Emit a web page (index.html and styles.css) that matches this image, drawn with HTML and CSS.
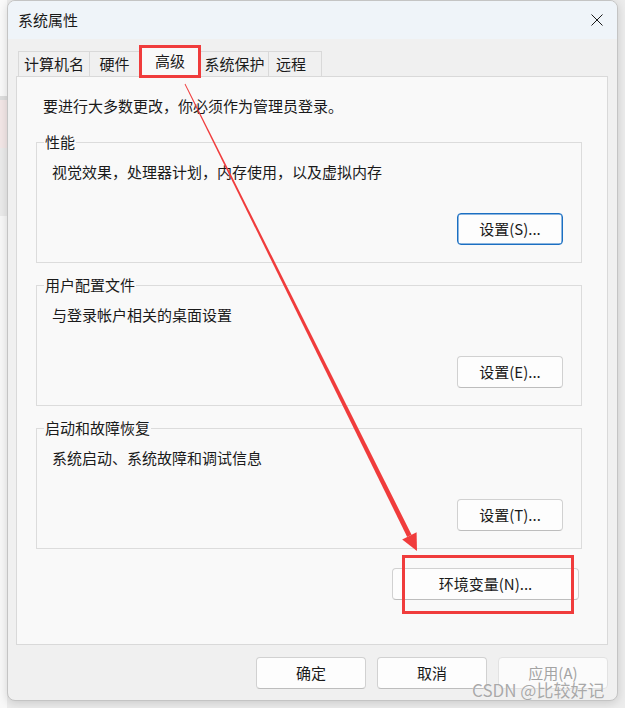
FILE: index.html
```html
<!DOCTYPE html>
<html lang="zh-CN">
  <head>
    <meta charset="UTF-8" />
    <meta name="viewport" content="width=device-width, initial-scale=1.0" />
    <title>系统属性</title>
    <link rel="stylesheet" href="styles.css">
  </head>
  <body>
    <div class="dialog">
      <div class="titlebar">
        <span class="title">系统属性</span>
        <svg class="close" width="12" height="12" viewBox="0 0 12 12">
          <path d="M0.5 0.5 L11.5 11.5 M11.5 0.5 L0.5 11.5" />
        </svg>
      </div>

      <div class="tabs">
        <div class="tab tab-name">计算机名</div>
        <div class="tab tab-hw">硬件</div>
        <div class="tab tab-adv active">高级</div>
        <div class="tab tab-prot">系统保护</div>
        <div class="tab tab-remote">远程</div>
      </div>

      <div class="panel">
        <p class="note">要进行大多数更改，你必须作为管理员登录。</p>

        <div class="group">
          <span class="group-title">性能</span>
          <p class="group-desc">视觉效果，处理器计划，内存使用，以及虚拟内存</p>
          <div class="group-actions">
            <button class="btn btn-default">设置(S)...</button>
          </div>
        </div>

        <div class="group">
          <span class="group-title">用户配置文件</span>
          <p class="group-desc">与登录帐户相关的桌面设置</p>
          <div class="group-actions">
            <button class="btn">设置(E)...</button>
          </div>
        </div>

        <div class="group">
          <span class="group-title">启动和故障恢复</span>
          <p class="group-desc">系统启动、系统故障和调试信息</p>
          <div class="group-actions">
            <button class="btn">设置(T)...</button>
          </div>
        </div>

        <div class="panel-actions">
          <button class="btn btn-wide">环境变量(N)...</button>
        </div>
      </div>

      <div class="footer">
        <button class="btn btn-footer">确定</button>
        <button class="btn btn-footer">取消</button>
        <button class="btn btn-footer" disabled>应用(A)</button>
      </div>
    </div>

    <div class="watermark">CSDN @比较好记</div>

    <!-- red annotations drawn over the screenshot -->
    <svg class="marks" width="625" height="708" viewBox="0 0 625 708">
      <rect x="140.5" y="46.5" width="59" height="30" />
      <rect x="403.5" y="556.5" width="169" height="56" />
      <polygon class="arrow" points="185.4,83.8 411.6,534.7 407.2,536.9 184.6,84.2" />
      <polygon class="arrow" points="417,551 416.6,532.2 402.2,539.4" />
    </svg>
  </body>
</html>
```

FILE: styles.css
```css
html,
body {
  margin: 0;
  padding: 0;
}

body {
  width: 625px;
  height: 708px;
  overflow: hidden;
  position: relative;
  font-family: "Noto Sans CJK SC", "Liberation Sans", sans-serif;
  font-size: 15px;
  color: #1a1a1a;
  background:
    linear-gradient(#fafafa 0 96px, #dedede 96px 100px, #f3e7e7 100px 148px, #ebebeb 148px 216px, #f8f8f8 216px) left top / 7px 100% no-repeat,
    #ececec;
}

.dialog {
  box-sizing: border-box;
  width: 611px;
  height: 701px;
  margin-left: 7px;
  display: flex;
  flex-direction: column;
  background-color: #f0f0f0;
  border: 1px solid #c4c4c4;
  border-radius: 8px;
  overflow: hidden;
  box-shadow: 0 2px 10px rgba(0, 0, 0, 0.15);
}

.titlebar {
  height: 38px;
  flex-shrink: 0;
  display: flex;
  align-items: center;
  padding-left: 10px;
  background-color: #eff4f9;
}

.title {
  line-height: 20px;
}

.close {
  margin-left: auto;
  margin-right: 14px;
}

.close path {
  stroke: #1a1a1a;
  stroke-width: 1;
  fill: none;
}

.tabs {
  height: 37px;
  flex-shrink: 0;
  display: flex;
  align-items: flex-end;
  padding-left: 10px;
}

.tab {
  box-sizing: border-box;
  height: 25px;
  display: flex;
  justify-content: center;
  align-items: center;
  border: 1px solid #d9d9d9;
  border-bottom: none;
  margin-right: -1px;
  background-color: #f0f0f0;
  line-height: 20px;
}

.tab-name {
  width: 72px;
}

.tab-hw {
  width: 51px;
}

.tab-adv {
  width: 62px;
}

.tab-prot {
  width: 69px;
}

.tab-remote {
  width: 54px;
  justify-content: flex-start;
  padding-left: 7px;
}

.tab.active {
  height: 30px;
  margin-bottom: -1px;
  padding-bottom: 3px;
  background-color: #f9f9f9;
  position: relative;
  z-index: 1;
}

.panel {
  margin: 0 9px 0 8px;
  padding: 19px 25px 44px 19px;
  border: 1px solid #d9d9d9;
  background-color: #f9f9f9;
}

.note {
  margin: 0;
  padding-left: 7px;
  line-height: 20px;
}

.group {
  margin-top: 22px;
  padding: 0 18px 17px 15px;
  border: 1px solid #dcdcdc;
}

.note + .group {
  margin-top: 26px;
}

.group-title {
  display: block;
  width: fit-content;
  margin: -11px 0 0 -8px;
  padding: 0 1px;
  line-height: 20px;
  background-color: #f9f9f9;
}

.group-desc {
  margin: 10px 0 0;
  line-height: 20px;
}

.group-actions {
  display: flex;
  justify-content: flex-end;
  margin-top: 31px;
}

.panel-actions {
  display: flex;
  justify-content: flex-end;
  margin-top: 19px;
  margin-right: 3px;
}

.btn {
  box-sizing: border-box;
  width: 106px;
  height: 32px;
  padding: 0;
  border: 1px solid #d1d1d1;
  border-bottom-color: #bdbdbd;
  border-radius: 4px;
  background-color: #fdfdfd;
  font-family: inherit;
  font-size: 15px;
  color: #1a1a1a;
  line-height: 20px;
}

.btn-default {
  border: 1px solid #1b6fc2;
  box-shadow: inset 0 0 0 0.5px #1b6fc2;
}

.btn-wide {
  width: 187px;
}

.footer {
  display: flex;
  justify-content: flex-end;
  gap: 11px;
  padding: 12px 9px 0 0;
}

.btn-footer {
  width: 110px;
}

.btn:disabled {
  color: #a3a3a3;
  border-color: #e2e2e2;
  background-color: #fbfbfb;
}

.watermark {
  position: absolute;
  left: 472px;
  top: 679px;
  z-index: 2;
  font-size: 17px;
  line-height: 22px;
  color: #a9a9a9;
  text-shadow: 0 0 1px #ffffff;
  white-space: nowrap;
}

.marks {
  position: absolute;
  top: 0;
  left: 0;
  z-index: 3;
  pointer-events: none;
}

.marks rect {
  fill: none;
  stroke: #f03c3c;
  stroke-width: 3;
}

.marks .arrow {
  fill: #f03c3c;
}
```
